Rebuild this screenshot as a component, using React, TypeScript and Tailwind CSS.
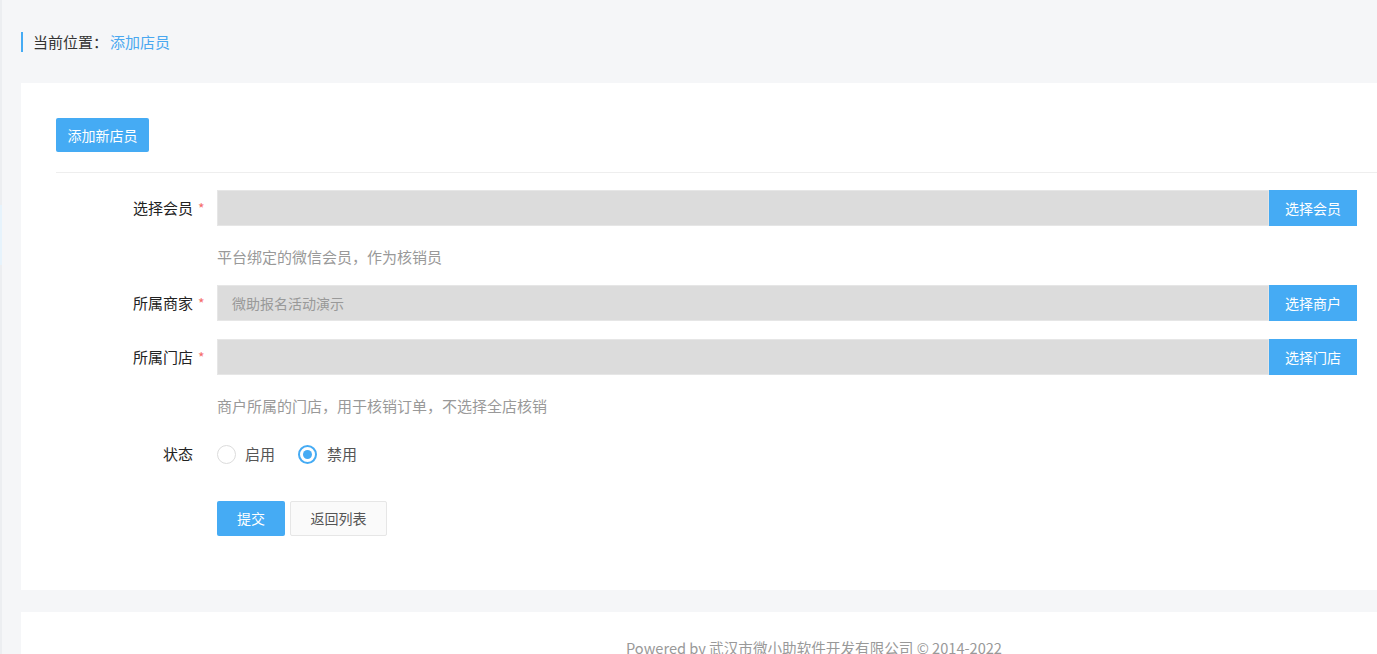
import React from "react";

const font = { fontFamily: '"Noto Sans CJK SC", "Noto Sans", sans-serif' };

function Label({ text, required }: { text: string; required?: boolean }) {
  return (
    <div className="w-[161px] shrink-0 flex justify-end items-center text-[15px] text-[#222]">
      <span>{text}</span>
      <span className="w-[24px] pl-[5px] text-[#f56c6c] text-[14px]">{required ? "*" : ""}</span>
    </div>
  );
}

function SelectRow({ label, value, btn }: { label: string; value?: string; btn: string }) {
  return (
    <div className="flex items-center h-[36px] pr-[20px]">
      <Label text={label} required />
      <div className="flex-1 h-[36px] bg-[#dcdcdc] border border-[#e6e6e6] flex items-center pl-[14px] text-[14px] text-[#999]">
        {value}
      </div>
      <button className="w-[88px] h-[36px] shrink-0 bg-[#45abf4] text-white text-[14px] flex items-center justify-center">
        {btn}
      </button>
    </div>
  );
}

function Help({ text }: { text: string }) {
  return (
    <div className="flex h-[22px] items-center">
      <div className="w-[161px] shrink-0" />
      <div className="text-[15px] text-[#999] leading-[22px]">{text}</div>
    </div>
  );
}

export default function App() {
  return (
    <div className="w-[1377px] h-[654px] overflow-hidden flex bg-[#f5f6f8]" style={font}>
      <div className="w-[2px] shrink-0 bg-[#eceef1] flex flex-col">
        <div className="h-[205px]" />
        <div className="h-[60px] bg-[#e6f3fc]" />
      </div>
      <div className="flex-1 pl-[19px]">
        <div className="mt-[32px] h-[20px] border-l-2 border-[#45abf4] pl-[10px] flex items-center text-[15px] leading-[20px]">
          <span className="text-[#333]">当前位置：</span>
          <span className="text-[#4aa8f0] ml-[2px]">添加店员</span>
        </div>

        <div className="mt-[31px] bg-white pt-[35px] pl-[35px] pb-[54px]">
          <button className="w-[93px] h-[34px] rounded-[2px] bg-[#45abf4] text-white text-[14px] flex items-center justify-center">
            添加新店员
          </button>
          <div className="mt-[20px] border-t border-[#eeeeee]" />

          <div className="pt-[17px]">
            <SelectRow label="选择会员" btn="选择会员" />
            <div className="pt-[20px] pb-[17px]">
              <Help text="平台绑定的微信会员，作为核销员" />
            </div>
            <SelectRow label="所属商家" value="微助报名活动演示" btn="选择商户" />
            <div className="h-[18px]" />
            <SelectRow label="所属门店" btn="选择门店" />
            <div className="pt-[20px] pb-[19px]">
              <Help text="商户所属的门店，用于核销订单，不选择全店核销" />
            </div>
            <div className="flex items-center h-[36px]">
              <Label text="状态" />
              <div className="flex items-center text-[15px] text-[#555]">
                <span className="w-[19px] h-[19px] rounded-full border border-[#dcdcdc] bg-white" />
                <span className="ml-[9px]">启用</span>
                <span className="ml-[23px] w-[19px] h-[19px] rounded-full border-2 border-[#45abf4] bg-white flex items-center justify-center">
                  <span className="w-[9px] h-[9px] rounded-full bg-[#45abf4]" />
                </span>
                <span className="ml-[10px]">禁用</span>
              </div>
            </div>
            <div className="mt-[29px] flex items-center">
              <div className="w-[161px] shrink-0" />
              <button className="w-[68px] h-[35px] rounded-[2px] bg-[#45abf4] text-white text-[14px] flex items-center justify-center">
                提交
              </button>
              <button className="ml-[5px] w-[97px] h-[35px] rounded-[2px] bg-[#fafafa] border border-[#e6e6e6] text-[#555] text-[14px] flex items-center justify-center">
                返回列表
              </button>
            </div>
          </div>
        </div>

        <div className="mt-[22px] bg-white h-[80px] pl-[230px] pt-[26px] flex justify-center">
          <span className="text-[14.6px] leading-[20px] text-[#999]">
            Powered by 武汉市微小助软件开发有限公司 © 2014-2022
          </span>
        </div>
      </div>
    </div>
  );
}
